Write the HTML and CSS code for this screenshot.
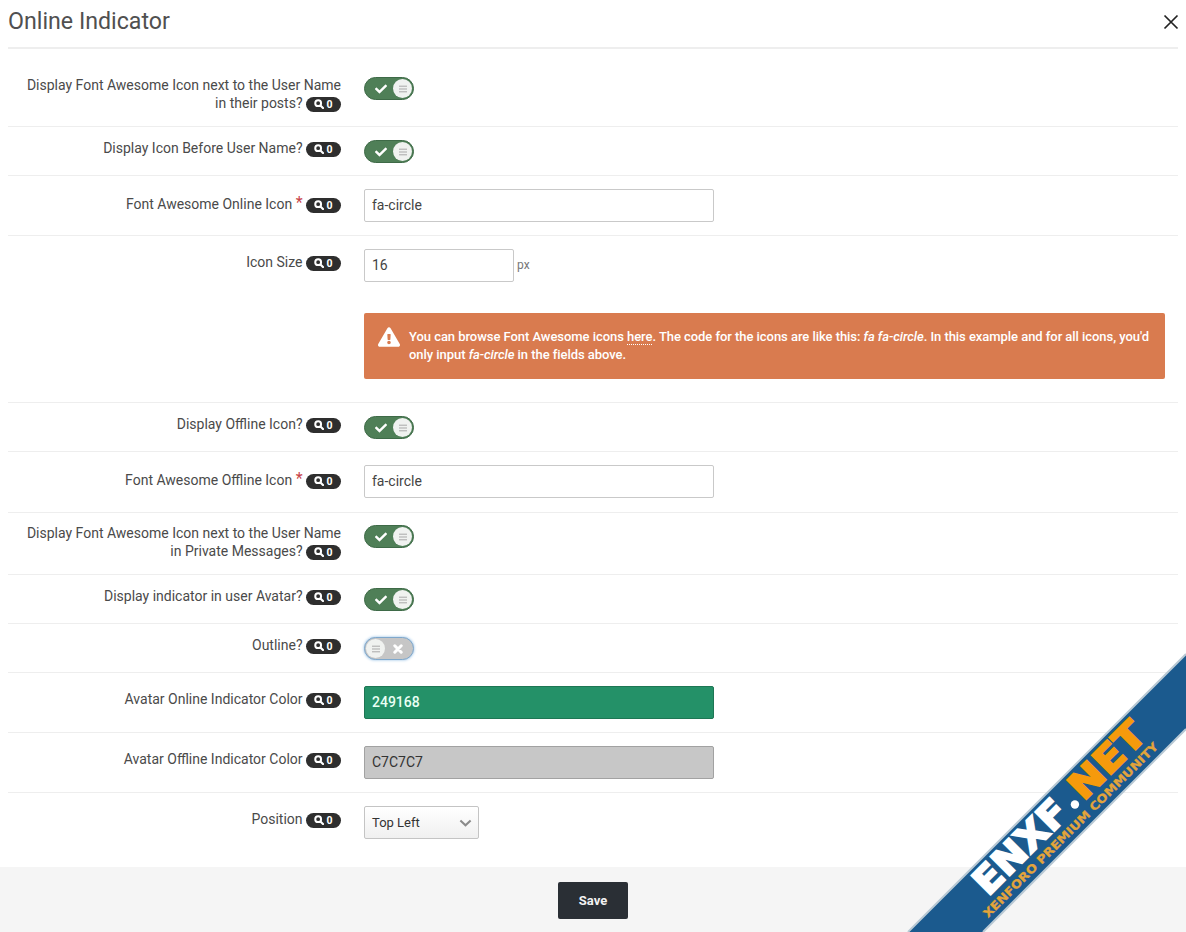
FILE: index.html
```html
<!DOCTYPE html>
<html lang="en">
<head>
<meta charset="utf-8">
<title>Online Indicator</title>
<link rel="stylesheet" href="styles.css">
</head>
<body>
<svg class="defs" width="0" height="0" aria-hidden="true">
  <symbol id="i-check" viewBox="0 0 512 512"><path d="M173.898 439.404l-166.4-166.4c-9.997-9.997-9.997-26.206 0-36.204l36.203-36.204c9.997-9.998 26.207-9.998 36.204 0L192 312.69 432.095 72.596c9.997-9.997 26.207-9.997 36.204 0l36.203 36.204c9.997 9.997 9.997 26.206 0 36.204l-294.4 294.401c-9.998 9.997-26.207 9.997-36.204-.001z" fill="currentColor"/></symbol>
  <symbol id="i-x" viewBox="0 0 10 10"><path d="M1.8 1.8l6.4 6.4M8.2 1.8l-6.4 6.4" stroke="currentColor" stroke-width="3" fill="none" stroke-linecap="round"/></symbol>
  <symbol id="i-bars" viewBox="0 0 10 10"><path d="M1 2.2h8M1 5h8M1 7.8h8" stroke="currentColor" stroke-width="1" fill="none"/></symbol>
  <symbol id="i-search" viewBox="0 0 12 12"><circle cx="5" cy="5" r="3.5" fill="none" stroke="currentColor" stroke-width="2.4"/><path d="M8 8l2.8 2.8" stroke="currentColor" stroke-width="2.6" stroke-linecap="round"/></symbol>
</svg>
<div class="overlay">
  <header class="head">
    <h1 class="title">Online Indicator</h1>
    <svg class="close" viewBox="0 0 16 16" aria-label="Close"><path d="M1.5 1.5l13 13M14.5 1.5l-13 13" stroke="#222" stroke-width="1.7" fill="none"/></svg>
  </header>
  <form class="form">
    <div class="row row-two-a">
      <div class="label">Display Font Awesome Icon next to the User Name in their posts? <span class="hint"><svg class="hint-ic"><use href="#i-search"/></svg>0</span></div>
      <div class="ctl"><span class="tog on"><svg class="tog-mark"><use href="#i-check"/></svg><span class="knob"><svg class="knob-ic"><use href="#i-bars"/></svg></span></span></div>
    </div>
    <div class="row">
      <div class="label">Display Icon Before User Name? <span class="hint"><svg class="hint-ic"><use href="#i-search"/></svg>0</span></div>
      <div class="ctl"><span class="tog on"><svg class="tog-mark"><use href="#i-check"/></svg><span class="knob"><svg class="knob-ic"><use href="#i-bars"/></svg></span></span></div>
    </div>
    <div class="row">
      <div class="label label-req">Font Awesome Online Icon <span class="req">*</span> <span class="hint"><svg class="hint-ic"><use href="#i-search"/></svg>0</span></div>
      <div class="ctl"><input class="input" value="fa-circle"></div>
    </div>
    <div class="row">
      <div class="label label-input">Icon Size <span class="hint"><svg class="hint-ic"><use href="#i-search"/></svg>0</span></div>
      <div class="ctl">
        <div class="size"><input class="input input-num" value="16"><span class="unit">px</span></div>
        <div class="alert">
          <svg class="alert-ic" viewBox="0 0 576 512"><path d="M569.517 440.013C587.975 472.007 564.806 512 527.94 512H48.054c-36.937 0-59.999-40.055-41.577-71.987L246.423 24.035c18.467-32.009 64.72-31.951 83.154 0l239.94 416.0zM288 354c-25.405 0-46 20.595-46 46s20.595 46 46 46 46-20.595 46-46-20.595-46-46-46zm-43.673-165.346l7.418 136c.347 6.364 5.609 11.346 11.982 11.346h48.546c6.373 0 11.635-4.982 11.982-11.346l7.418-136c.375-6.874-5.098-12.654-11.982-12.654h-63.383c-6.884 0-12.356 5.78-11.981 12.654z" fill="#fff"/></svg>
          <div>You can browse Font Awesome icons <span class="alert-link">here</span>. The code for the icons are like this: <i>fa fa-circle</i>. In this example and for all icons, you'd only input <i>fa-circle</i> in the fields above.</div>
        </div>
      </div>
    </div>
    <div class="row">
      <div class="label">Display Offline Icon? <span class="hint"><svg class="hint-ic"><use href="#i-search"/></svg>0</span></div>
      <div class="ctl"><span class="tog on"><svg class="tog-mark"><use href="#i-check"/></svg><span class="knob"><svg class="knob-ic"><use href="#i-bars"/></svg></span></span></div>
    </div>
    <div class="row row-plus">
      <div class="label label-req">Font Awesome Offline Icon <span class="req">*</span> <span class="hint"><svg class="hint-ic"><use href="#i-search"/></svg>0</span></div>
      <div class="ctl"><input class="input" value="fa-circle"></div>
    </div>
    <div class="row row-two-b">
      <div class="label">Display Font Awesome Icon next to the User Name in Private Messages? <span class="hint"><svg class="hint-ic"><use href="#i-search"/></svg>0</span></div>
      <div class="ctl"><span class="tog on"><svg class="tog-mark"><use href="#i-check"/></svg><span class="knob"><svg class="knob-ic"><use href="#i-bars"/></svg></span></span></div>
    </div>
    <div class="row">
      <div class="label">Display indicator in user Avatar? <span class="hint"><svg class="hint-ic"><use href="#i-search"/></svg>0</span></div>
      <div class="ctl"><span class="tog on"><svg class="tog-mark"><use href="#i-check"/></svg><span class="knob"><svg class="knob-ic"><use href="#i-bars"/></svg></span></span></div>
    </div>
    <div class="row">
      <div class="label">Outline? <span class="hint"><svg class="hint-ic"><use href="#i-search"/></svg>0</span></div>
      <div class="ctl"><span class="tog off"><span class="knob"><svg class="knob-ic"><use href="#i-bars"/></svg></span><svg class="tog-x"><use href="#i-x"/></svg></span></div>
    </div>
    <div class="row">
      <div class="label label-input">Avatar Online Indicator Color <span class="hint"><svg class="hint-ic"><use href="#i-search"/></svg>0</span></div>
      <div class="ctl"><input class="input input-green" value="249168"></div>
    </div>
    <div class="row">
      <div class="label label-input">Avatar Offline Indicator Color <span class="hint"><svg class="hint-ic"><use href="#i-search"/></svg>0</span></div>
      <div class="ctl"><input class="input input-grey" value="C7C7C7"></div>
    </div>
    <div class="row row-last">
      <div class="label label-input">Position <span class="hint"><svg class="hint-ic"><use href="#i-search"/></svg>0</span></div>
      <div class="ctl">
        <div class="select">Top Left<svg class="chev" viewBox="0 0 14 8"><path d="M1.5 1.2L7 6.4l5.5-5.2" stroke="#8a8a8a" stroke-width="2.2" fill="none"/></svg></div>
      </div>
    </div>
  </form>
  <footer class="foot"><button class="save" type="button">Save</button></footer>
</div>
<svg class="ribbon" viewBox="0 0 280 280" aria-hidden="true">
  <polygon points="280,2 280,77 77,280 2,280" fill="#1b5a8e"/>
  <path d="M2 280L280 2M77 280L280 77" stroke="#b9c9d4" stroke-width="2" fill="none"/>
  <g transform="translate(147 173) rotate(-45)">
    <text class="rb-main" x="-97" y="5" textLength="117" lengthAdjust="spacingAndGlyphs">ENXF</text>
    <circle cx="30" cy="1" r="4.2" fill="#fff"/>
    <text class="rb-net" x="38" y="5" textLength="92" lengthAdjust="spacingAndGlyphs">NET</text>
    <text class="rb-sub" x="-112" y="20" textLength="242" lengthAdjust="spacingAndGlyphs">XENFORO PREMIUM COMMUNITY</text>
  </g>
</svg>
</body>
</html>
```
FILE: styles.css
```css
* { box-sizing: border-box; }
html, body { margin: 0; height: 932px; overflow: hidden; }
body {
  background: #fff;
  font-family: Roboto, "Liberation Sans", sans-serif;
  font-size: 14px;
  line-height: 18px;
  color: #4a4a4a;
  position: relative;
}
.defs { position: absolute; }
.overlay { display: flex; flex-direction: column; height: 932px; }

.head {
  display: flex;
  justify-content: space-between;
  align-items: center;
  height: 49px;
  margin: 0 8px;
  padding-bottom: 6px;
  border-bottom: 2px solid #eeeeee;
}
.title { margin: 0; font-size: 23.2px; font-weight: 400; line-height: 32px; color: #505050; }
.close { width: 16px; height: 16px; margin: 2px -1px 0 0; }

.form { flex: 1; padding: 15px 8px 0; }
.row {
  display: grid;
  grid-template-columns: 333px 1fr;
  column-gap: 23px;
  padding: 12px 13px 12px 0;
  border-bottom: 1px solid #eeeeee;
}
.row-two-a { padding-bottom: 14px; }
.row-two-b { padding-top: 11px; padding-bottom: 14px; }
.row-plus { padding-bottom: 13px; }
.row-last { border-bottom: 0; }
.label { text-align: right; padding-left: 16px; }
.label-req { padding-top: 7px; }
.label-input { padding-top: 5px; }
.ctl { padding-top: 1px; min-width: 0; }

.hint {
  display: inline-flex;
  align-items: center;
  justify-content: center;
  gap: 2px;
  width: 35px;
  height: 15px;
  border-radius: 8px;
  background: #2e2e2e;
  color: #fff;
  font-size: 10.5px;
  font-weight: 700;
  line-height: 15px;
  vertical-align: -1px;
}
.hint-ic { width: 10px; height: 10px; }
.req { color: #c84448; font-size: 16px; line-height: 14px; vertical-align: 1px; }

.tog {
  display: flex;
  align-items: center;
  justify-content: space-between;
  width: 50px;
  height: 23px;
  padding: 0 1px 0 10px;
  border-radius: 12px;
}
.tog.on { background: #4f7f57; border: 1px solid #3e6a47; color: #fff; }
.tog.off {
  background: #c6c6c6;
  border: 1px solid #7fa8cc;
  box-shadow: 0 0 3px #8ebbe3;
  padding: 0 10px 0 1px;
  color: #fff;
}
.tog-mark { width: 12px; height: 12px; }
.tog-x { width: 10px; height: 10px; }
.knob {
  display: flex;
  align-items: center;
  justify-content: center;
  width: 19px;
  height: 19px;
  border-radius: 50%;
  background: #f0f2f0;
  color: #a9a9a9;
}
.knob-ic { width: 10px; height: 10px; }

.input {
  display: block;
  width: 350px;
  height: 33px;
  margin-bottom: 1px;
  padding: 0 7px 2px;
  border: 1px solid #c9c9c9;
  border-radius: 2px;
  background: #fff;
  color: #444;
  font: 400 14px Roboto, "Liberation Sans", sans-serif;
}
.input-green { background: #249168; border-color: #1e7654; color: #eafff4; font-weight: 500; }
.input-grey { background: #c7c7c7; border-color: #a2a2a2; color: #333; }
.size { display: flex; align-items: flex-start; gap: 3px; }
.input-num { width: 150px; }
.unit { font-size: 12px; line-height: 32px; color: #777; }

.alert {
  display: flex;
  align-items: flex-start;
  gap: 9px;
  margin-top: 30px;
  margin-bottom: 11px;
  height: 66px;
  padding: 15px 14px 0;
  background: #d97b4f;
  border-radius: 2px;
  color: #fff;
  font-size: 13px;
  font-weight: 500;
  letter-spacing: -0.05px;
}
.alert-ic { flex: none; width: 22px; height: 20px; margin-top: -1px; }
.alert-link { border-bottom: 1px dotted #fff; }

.select {
  display: flex;
  align-items: center;
  justify-content: space-between;
  width: 115px;
  height: 33px;
  padding: 0 6px 0 7px;
  border: 1px solid #c4c4c4;
  border-radius: 2px;
  background: linear-gradient(#ffffff, #f0f0f0);
  color: #333;
  font-size: 13px;
}
.chev { width: 13px; height: 8px; }

.foot {
  display: flex;
  justify-content: center;
  height: 65px;
  padding-top: 15px;
  background: #f5f5f5;
}
.save {
  width: 70px;
  height: 37px;
  border: 0;
  border-radius: 2px;
  background: #2a2f35;
  color: #f2f2f2;
  font: 700 13px Roboto, "Liberation Sans", sans-serif;
}

.ribbon { position: absolute; right: 0; bottom: 0; width: 280px; height: 280px; }
.rb-main, .rb-net { font: 700 37px "DejaVu Sans", sans-serif; stroke-width: 2; }
.rb-main { fill: #fff; stroke: #fff; }
.rb-net { fill: #f59a0c; stroke: #f59a0c; }
.rb-sub { font: 700 11.5px "DejaVu Sans", sans-serif; fill: #e3a43a; stroke: #e3a43a; stroke-width: 0.3; }
```
